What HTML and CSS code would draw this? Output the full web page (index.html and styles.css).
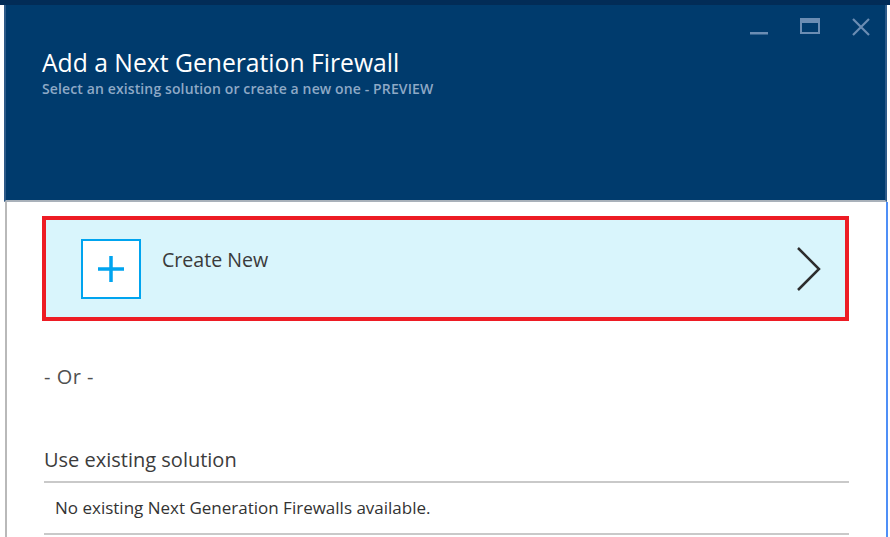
FILE: index.html
```html
<!DOCTYPE html>
<html>
<head>
<meta charset="utf-8">
<link rel="stylesheet" href="styles.css">
</head>
<body>
<div class="topstrip"></div>
<div class="blade">
  <header class="head">
    <div class="controls">
      <svg class="ctl" width="20" height="20" viewBox="0 0 20 20"><rect x="1" y="15" width="18" height="2.5" fill="#6b8db3"/></svg>
      <svg class="ctl" width="22" height="20" viewBox="0 0 22 20"><rect x="2" y="2" width="18" height="14" fill="none" stroke="#6b8db3" stroke-width="2"/><rect x="2" y="2" width="18" height="4" fill="#6b8db3"/></svg>
      <svg class="ctl" width="20" height="20" viewBox="0 0 20 20"><path d="M2 2 L18 18 M18 2 L2 18" stroke="#6b8db3" stroke-width="2.2"/></svg>
    </div>
    <h1 class="title">Add a Next Generation Firewall</h1>
    <div class="subtitle">Select an existing solution or create a new one - PREVIEW</div>
  </header>
  <main class="content">
    <div class="create">
      <div class="plusbox">
        <svg width="28" height="28" viewBox="0 0 28 28"><path d="M14 1 V27 M1 14 H27" stroke="#00a4ef" stroke-width="3.5"/></svg>
      </div>
      <div class="create-label">Create New</div>
      <svg class="chev" width="28" height="48" viewBox="0 0 28 48"><path d="M3 3 L24 24 L3 45" fill="none" stroke="#2d2d2d" stroke-width="2.5"/></svg>
    </div>
    <div class="or">- Or -</div>
    <div class="section-title">Use existing solution</div>
    <div class="row">No existing Next Generation Firewalls available.</div>
  </main>
</div>
</body>
</html>
```

FILE: styles.css
```css
html, body {
  margin: 0;
  padding: 0;
  width: 890px;
  height: 537px;
  overflow: hidden;
  background: #ffffff;
  font-family: "Open Sans", "Noto Sans", sans-serif;
}
.topstrip {
  height: 5px;
  background: #022c57;
}
.blade {
  display: flex;
  flex-direction: column;
  height: 532px;
}
.head {
  position: relative;
  height: 197px;
  flex: none;
  background: #003b6d;
  border-left: 2px solid #2d5a88;
  border-right: 2px solid #2d5a88;
  margin-left: 4px;
  margin-right: 3px;
  padding-left: 36px;
  box-sizing: border-box;
  border-bottom: 2px solid #a9b1ba;
}
.controls {
  position: absolute;
  right: 14px;
  top: 12px;
  display: flex;
  gap: 30px;
}
.title {
  margin: 0;
  padding-top: 43px;
  font-weight: 400;
  font-size: 24.7px;
  line-height: 30px;
  color: #ffffff;
}
.subtitle {
  font-size: 14px;
  font-weight: 600;
  color: #8ea9c6;
  line-height: 18px;
  margin-top: 2px;
  letter-spacing: 0.12px;
}
.content {
  flex: 1;
  margin-left: 5px;
  margin-right: 2px;
  border-left: 2px solid #b9b9b9;
  border-right: 2px solid #4f8ff7;
  padding-left: 35px;
  padding-right: 37px;
  padding-top: 14px;
}
.create {
  display: flex;
  align-items: center;
  height: 97px;
  border: 4px solid #ed1c24;
  background: #d9f5fc;
  padding-left: 35px;
  padding-right: 22px;
}
.plusbox {
  width: 56px;
  height: 56px;
  border: 2px solid #00a4ef;
  background: #ffffff;
  display: flex;
  align-items: center;
  justify-content: center;
}
.create-label {
  flex: 1;
  margin-left: 21px;
  margin-top: -19px;
  font-size: 19.6px;
  color: #3a3a3a;
}
.or {
  margin-top: 44px;
  margin-left: 2px;
  font-size: 20px;
  color: #505050;
  line-height: 24px;
  letter-spacing: 0.5px;
}
.section-title {
  margin-top: 57px;
  margin-left: 2px;
  font-size: 20px;
  color: #3c3c3c;
  line-height: 28px;
  padding-bottom: 7px;
  border-bottom: 2px solid #c9c9c9;
}
.row {
  margin-left: 2px;
  padding-left: 11px;
  font-size: 17px;
  color: #333333;
  line-height: 50px;
  border-bottom: 2px solid #c9c9c9;
}
```
